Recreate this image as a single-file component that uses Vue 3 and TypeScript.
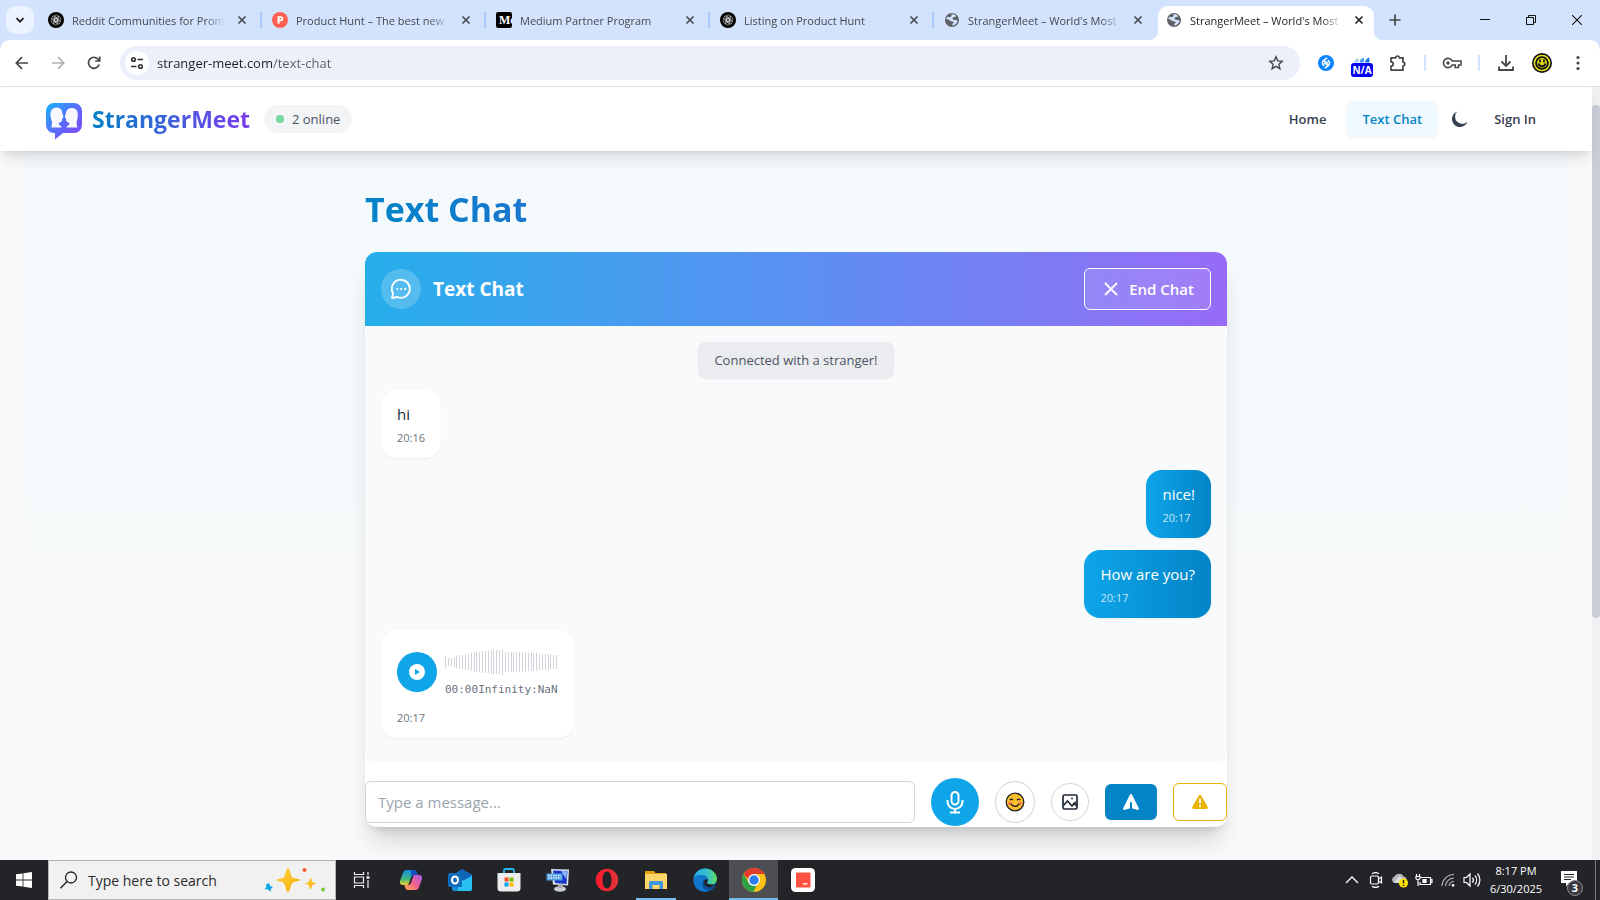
<script setup lang="ts">
import { ref } from 'vue'

interface Tab {
  id: number
  icon: 'knot' | 'hunt' | 'medium' | 'globe'
  title: string
  active?: boolean
}

interface Message {
  id: number
  text: string
  time: string
  mine: boolean
  voice?: boolean
}

const tabs: Tab[] = [
  { id: 1, icon: 'knot', title: 'Reddit Communities for Promotion' },
  { id: 2, icon: 'hunt', title: 'Product Hunt – The best new products' },
  { id: 3, icon: 'medium', title: 'Medium Partner Program' },
  { id: 4, icon: 'knot', title: 'Listing on Product Hunt' },
  { id: 5, icon: 'globe', title: "StrangerMeet – World's Most Loved" },
  { id: 6, icon: 'globe', title: "StrangerMeet – World's Most Loved", active: true },
]

const messages: Message[] = [
  { id: 1, text: 'hi', time: '20:16', mine: false },
  { id: 2, text: 'nice!', time: '20:17', mine: true },
  { id: 3, text: 'How are you?', time: '20:17', mine: true },
  { id: 4, text: '', time: '20:17', mine: false, voice: true },
]

const levels = [
  12, 8, 8, 10, 12, 14, 14, 16, 16, 18, 20, 20, 20, 22, 22, 22, 24, 24, 24, 24,
  26, 20, 20, 20, 20, 20, 20, 20, 18, 18, 18, 18, 18, 16, 16, 16, 16, 14, 14, 14,
]
const bars = levels.map((h, i) => ({ x: Math.round(i * 2.85), y: 20 - h / 2, h }))

const address = ref('stranger-meet.com/text-chat')
const draft = ref('')
const query = ref('')
</script>

<template>
  <div class="screen">
    <header class="tabstrip">
      <button class="tab-search" aria-label="Search tabs">
        <svg width="12" height="12" viewBox="0 0 12 12"><path d="M2.500 4.200 6 7.700l3.500-3.500" fill="none" stroke="#1f1f1f" stroke-width="1.800" /></svg>
      </button>
      <div class="tabs">
        <div v-for="tab in tabs" :key="tab.id" class="tab" :class="{ active: tab.active }">
          <svg v-if="tab.icon === 'knot'" class="favicon" viewBox="0 0 16 16">
            <circle cx="8" cy="8" r="8" />
            <g fill="none" stroke="#ddd" stroke-width=".6">
              <rect v-for="n in 6" :key="n" x="6.200" y="3" width="4.400" height="6.400" rx="2.200" :transform="`rotate(${n * 60} 8 8)`" />
            </g>
          </svg>
          <svg v-else-if="tab.icon === 'hunt'" class="favicon" viewBox="0 0 16 16">
            <circle cx="8" cy="8" r="8" fill="#ff6154" />
            <path d="M5.600 11.800V4.300h3.200a2.500 2.500 0 0 1 0 5H7.500v2.500zM7.500 6v1.600h1.200a.8.8 0 0 0 0-1.600z" fill="#fff" fill-rule="evenodd" />
          </svg>
          <svg v-else-if="tab.icon === 'medium'" class="favicon" viewBox="0 0 16 16">
            <rect width="16" height="16" rx="2" />
            <text x="3" y="12" fill="#fff" font-family="Liberation Serif, serif" font-weight="700" font-size="12">Mc</text>
          </svg>
          <svg v-else class="favicon" viewBox="0 0 16 16">
            <circle cx="8" cy="8" r="7" fill="#5f6368" />
            <path d="M7.300 2.300c1.800-.5 3.700.2 4.900 1.500l-1 1.300H9.500L8.300 6.500 9.800 8h2.400l1.400.8c-.3 1.700-1.300 3.200-2.900 4l-2.300 1v-2L10 10.500 8.700 9.400 6.200 9 4.500 7.400 2.300 7c.3-.9.700-1.700 1.300-2.400l2 .8L7.700 4z" fill="#d3e3fd" />
          </svg>
          <button class="tab-title">{{ tab.title }}</button>
          <button class="tab-close" :aria-label="`Close ${tab.title}`">
            <svg width="10" height="10" viewBox="0 0 10 10"><path d="m1.500 1.500 7 7m0-7-7 7" stroke="currentColor" stroke-width="1.600" /></svg>
          </button>
        </div>
      </div>
      <button class="plain new-tab" aria-label="New tab">
        <svg width="12" height="12" viewBox="0 0 12 12"><path d="M6 .5v11M.5 6h11" stroke="#444746" stroke-width="1.700" /></svg>
      </button>
      <div class="window-controls">
        <button class="plain" aria-label="Minimize"><svg width="10" height="10" viewBox="0 0 10 10"><path d="M0 4.500h10" stroke="#111" /></svg></button>
        <button class="plain" aria-label="Restore"><svg width="10" height="10" viewBox="0 0 10 10"><path d="M.5 2.500h7v7h-7zM2.500 2.500v-2h7v7h-2" fill="none" stroke="#111" /></svg></button>
        <button class="plain" aria-label="Close window"><svg width="10" height="10" viewBox="0 0 10 10"><path d="m0 0 10 10M10 0 0 10" stroke="#111" stroke-width="1.100" /></svg></button>
      </div>
    </header>

    <div class="toolbar-wrap">
      <nav class="toolbar" aria-label="Browser">
        <button class="plain" aria-label="Back"><svg width="14" height="14" viewBox="0 0 14 14"><path d="M13 7H1.500M7 1.200 1.300 7 7 12.800" fill="none" stroke="#474747" stroke-width="1.700" /></svg></button>
        <button class="plain" aria-label="Forward"><svg width="14" height="14" viewBox="0 0 14 14"><path d="M1 7h11.500M7 1.200 12.700 7 7 12.800" fill="none" stroke="#b0b0b0" stroke-width="1.700" /></svg></button>
        <button class="plain" aria-label="Reload"><svg width="14" height="14" viewBox="0 0 14 14"><path d="M12.200 8.500A5.500 5.500 0 1 1 11.400 3.500L12.500 5M12.700.5V5H8.200" fill="none" stroke="#474747" stroke-width="1.700" /></svg></button>
        <div class="omnibox">
          <button class="site-info" aria-label="Site information">
            <svg width="14" height="14" viewBox="0 0 14 14" fill="none" stroke="#303134" stroke-width="1.600"><circle cx="3.500" cy="3.500" r="1.800" /><path d="M7.500 3.500H13M1 10.500h5.500" /><circle cx="10.500" cy="10.500" r="1.800" /></svg>
          </button>
          <input v-model="address" class="address" aria-label="Address" spellcheck="false" />
          <button class="plain" aria-label="Bookmark">
            <svg width="16" height="16" viewBox="0 0 16 16"><path d="m8 1.800 1.800 4.100 4.500.4-3.400 3 1 4.400L8 11.400l-3.900 2.300 1-4.400-3.400-3 4.500-.4z" fill="none" stroke="#474747" stroke-width="1.400" /></svg>
          </button>
        </div>
        <div class="extensions">
          <button class="plain" aria-label="Shazam">
            <svg width="16" height="16" viewBox="0 0 16 16"><circle cx="8" cy="8" r="8" fill="#0a84ff" /><path d="M8.800 3.200 6 5.200C3.800 6.900 4 9 5.800 10.400M7.200 12.800l2.800-2c2.200-1.700 2-3.800.2-5.200M6.300 8.200 9.500 10M6.600 6.100l3 2" fill="none" stroke="#fff" stroke-width="1.500" stroke-linecap="round" /></svg>
          </button>
          <button class="rank" aria-label="Site rank">
            <svg width="18" height="6" viewBox="0 0 18 6"><path d="M1 5.500C1 3.500 3 2 5 1c.8 2 .8 3.500 0 4.500z" fill="#a6d0fa" /><path d="M6.500 5.500C6.500 3 8.500 1.500 10.500.5c.8 2 .8 4 0 5z" fill="#4b9cf3" /><path d="M12 5.500c0-2.500 2-4 4-5 .8 2 .8 4 0 5z" fill="#1a73e8" /></svg>
            <span>N/A</span>
          </button>
          <button class="plain" aria-label="Extensions">
            <svg width="18" height="18" viewBox="0 0 18 18"><path d="M2 3.800h4.700a1.800 1.800 0 0 1 3.600 0H14v4.400a1.800 1.800 0 0 1 0 3.600v4.400H2v-4a2.200 2.200 0 0 0 0-4.400z" fill="none" stroke="#474747" stroke-width="1.700" stroke-linejoin="round" /></svg>
          </button>
          <i class="divider"></i>
          <button class="plain" aria-label="Passwords">
            <svg width="20" height="12" viewBox="0 0 20 12"><path d="M10.200 4A4.600 4.600 0 1 0 10.200 8h3v2.500h3.300V8H19V4z" fill="none" stroke="#474747" stroke-width="1.600" /><circle cx="6" cy="6" r="1.700" fill="#474747" /></svg>
          </button>
          <i class="divider"></i>
          <button class="plain" aria-label="Downloads">
            <svg width="18" height="18" viewBox="0 0 18 18"><path d="M9 1v10.500M4.500 7.500 9 12l4.500-4.500M2 12.500V16h14v-3.500" fill="none" stroke="#474747" stroke-width="1.800" /></svg>
          </button>
          <button class="plain" aria-label="Profile">
            <svg width="20" height="20" viewBox="0 0 20 20"><circle cx="10" cy="10" r="10" fill="#111" /><circle cx="10" cy="10" r="7.600" fill="none" stroke="#e5e010" stroke-width="1.500" /><circle cx="10" cy="10" r="5" fill="#d8d414" /><path d="M8 6.500v2.800M12 6.500v2.800M6.500 10.500c1 3.700 6 3.700 7 0" fill="none" stroke="#111" stroke-width="1.700" /></svg>
          </button>
          <button class="plain" aria-label="Menu">
            <svg width="4" height="16" viewBox="0 0 4 16" fill="#474747"><circle cx="2" cy="2.500" r="1.600" /><circle cx="2" cy="8" r="1.600" /><circle cx="2" cy="13.500" r="1.600" /></svg>
          </button>
        </div>
      </nav>
    </div>

    <div class="viewport">
      <div class="page">
        <header class="site-header">
          <a class="brand" href="#">
            <svg width="36" height="38" viewBox="0 0 36 38">
              <defs><linearGradient id="logo" x1="0" y1="0" x2="1" y2="1"><stop stop-color="#14b4ff" /><stop offset=".5" stop-color="#5a6cfb" /><stop offset="1" stop-color="#8a3ffc" /></linearGradient></defs>
              <path d="M8 1h20a8 8 0 0 1 8 8v14a8 8 0 0 1-8 8H17l-8 6.500V31H8a8 8 0 0 1-8-8V9a8 8 0 0 1 8-8z" fill="url(#logo)" />
              <path d="M4.500 13C4 8.500 7 5.500 10.500 5.500c3.700 0 6 2.700 6 6.500l1 3-1.200 1c.2 2.500-.8 4.500-3.300 4.700v2.200c1.500.6 2.500 1.200 2.700 2.600H5.300c.3-1.500 1-3.700.7-6C5.300 18 4.700 15.500 4.500 13zM31.800 13c.5-4.500-2.500-7-6-7-3.700 0-6 2.700-6 6l-1.200 3 1.200 1c-.2 2.500.8 4.500 3.300 4.700v2.200c-1.500.6-2.500 1.200-2.700 2.600h11c-.3-1.500-1-3.700-.7-6 .6-1.500 1-4 1.100-6.500z" fill="#f8f7fc" />
            </svg>
            <span>StrangerMeet</span>
          </a>
          <span class="online"><i></i>2 online</span>
          <nav class="site-nav" aria-label="Main">
            <a href="#">Home</a>
            <a href="#" class="current">Text Chat</a>
            <button class="plain moon" aria-label="Dark mode"><svg width="16" height="16" viewBox="0 0 16 16"><path d="M5.200.5A8 8 0 1 0 15.500 10.800 7.200 7.200 0 0 1 5.200.5z" fill="#374151" /></svg></button>
            <a href="#" class="signin">Sign In</a>
          </nav>
        </header>

        <main class="backdrop">
          <div class="column">
            <h1>Text Chat</h1>
            <section class="card">
              <header class="card-head">
                <span class="chat-badge">
                  <svg width="20" height="20" viewBox="0 0 20 20"><path d="M1 19l1.100-4.600A9 9 0 1 1 6.200 18z" fill="none" stroke="#fff" stroke-width="1.800" stroke-linejoin="round" /><circle cx="6.300" cy="10" r="1.100" fill="#fff" /><circle cx="10.200" cy="10" r="1.100" fill="#fff" /><circle cx="14.100" cy="10" r="1.100" fill="#fff" /></svg>
                </span>
                <h2>Text Chat</h2>
                <button class="end-chat">
                  <svg width="14" height="14" viewBox="0 0 14 14"><path d="m1 1 12 12M13 1 1 13" stroke="#fff" stroke-width="1.800" /></svg>
                  End Chat
                </button>
              </header>

              <div class="messages">
                <p class="notice">Connected with a stranger!</p>
                <div v-for="m in messages" :key="m.id" class="bubble" :class="{ mine: m.mine }">
                  <div v-if="m.voice" class="voice">
                    <button class="play" aria-label="Play voice message">
                      <svg width="16" height="16" viewBox="0 0 16 16"><circle cx="8" cy="8" r="8" fill="#fff" /><path d="M6 5v6l5-3z" fill="#0ea5e9" /></svg>
                    </button>
                    <div class="track">
                      <svg width="112" height="40" viewBox="0 0 112 40" shape-rendering="crispEdges">
                        <rect v-for="(bar, i) in bars" :key="i" :x="bar.x" :y="bar.y" width="1" :height="bar.h" fill="#d1d5db" />
                      </svg>
                      <div class="duration"><span>00:00</span><span>Infinity:NaN</span></div>
                    </div>
                  </div>
                  <p v-else>{{ m.text }}</p>
                  <time>{{ m.time }}</time>
                </div>
              </div>

              <form class="composer" @submit.prevent>
                <input v-model="draft" class="draft" placeholder="Type a message..." aria-label="Message" />
                <button type="button" class="mic" aria-label="Record voice">
                  <svg width="24" height="24" viewBox="0 0 24 24" fill="none" stroke="#fff" stroke-width="2"><rect x="8.500" y="2" width="7" height="12.500" rx="3.500" /><path d="M4.500 10v1.500a7.500 7.500 0 0 0 15 0V10M12 19v3M7 22.500h10" /></svg>
                </button>
                <button type="button" class="emoji" aria-label="Emoji">
                  <svg width="20" height="20" viewBox="0 0 20 20"><circle cx="10" cy="10" r="8.800" fill="#fdbf2d" stroke="#222" stroke-width="1.300" /><circle cx="5" cy="11.500" r="1.800" fill="#f2784b" /><circle cx="15" cy="11.500" r="1.800" fill="#f2784b" /><path d="M4.800 8.200c.8-1.500 2.400-1.500 3.200 0M12 8.200c.8-1.500 2.400-1.500 3.200 0M6 11.800c1.500 3.400 6.500 3.400 8 0" fill="none" stroke="#222" stroke-width="1.300" /></svg>
                </button>
                <button type="button" class="image" aria-label="Send image">
                  <svg width="16" height="16" viewBox="0 0 16 16" fill="none" stroke="#1f2937" stroke-width="1.700"><rect x="1" y="1" width="14" height="14" rx="1.500" /><path d="m1.500 11.500 4-4.500 4.500 5 2-2.500 3 2.500M12 9.500l2-1.500" /><circle cx="10" cy="4.600" r="1" fill="#1f2937" stroke="none" /></svg>
                </button>
                <button class="send" aria-label="Send">
                  <svg width="16" height="16" viewBox="0 0 16 16"><path d="M8 0c.7 0 1 .4 1.300 1L15.800 14.300c.4 1-.3 1.900-1.300 1.600L9 14.200V9a1 1 0 0 0-2 0v5.200l-5.500 1.700c-1 .3-1.700-.6-1.300-1.600L6.700 1C7 .4 7.300 0 8 0z" fill="#fff" /></svg>
                </button>
                <button type="button" class="report" aria-label="Report">
                  <svg width="16" height="14" viewBox="0 0 16 14"><path d="M8 0c.6 0 1 .3 1.300.8l6.400 11c.6 1-.1 2.200-1.300 2.200H1.600C.4 14-.3 12.800.3 11.800l6.400-11C7 .3 7.400 0 8 0z" fill="#eab308" /><path d="M8 3.500v5M8 10v2" stroke="#fff" stroke-width="1.800" /></svg>
                </button>
              </form>
            </section>
          </div>
        </main>
      </div>
      <div class="scrollbar"><div class="thumb"></div></div>
    </div>

    <footer class="taskbar">
      <button class="task start" aria-label="Start"><svg width="16" height="16" viewBox="0 0 16 16"><path d="M0 2.300 6.600 1.400v6.200H0zM7.400 1.300 16 0v7.600H7.400zM0 8.400h6.600v6.200L0 13.700zM7.400 8.400H16V16l-8.600-1.300z" fill="#fff" /></svg></button>
      <label class="search">
        <svg width="18" height="18" viewBox="0 0 18 18"><circle cx="11" cy="6.500" r="5.500" fill="none" stroke="#222" stroke-width="1.300" /><path d="m7 10.500-6.500 6.700" stroke="#222" stroke-width="1.400" /></svg>
        <input v-model="query" placeholder="Type here to search" aria-label="Search" />
        <svg width="62" height="26" viewBox="0 0 62 26">
          <defs><linearGradient id="spark" x1="0" y1="0" x2="1" y2="1"><stop stop-color="#ffd84a" /><stop offset="1" stop-color="#f6a800" /></linearGradient></defs>
          <path d="M24 1c2 0 2.500 8 4.500 9.500S36 11.500 36 13s-5.500 1-7.500 3S26 25 24 25s-2.500-7-4.500-9-7-1.500-7-3 5-1 7-2.500S22 1 24 1z" fill="url(#spark)" />
          <path d="M46.500 11c1 0 1.200 3.400 2 4.100s3.500.6 3.500 1.400-2.700.7-3.500 1.500-1 4-2 4-1.200-3.200-2-4-3.500-.7-3.500-1.500 2.700-.7 3.500-1.400 1-4.100 2-4.100z" fill="url(#spark)" />
          <path d="m5 16 1.300 3L9 20l-2 1.700-.4 3L4 22.500.5 22l1.800-2-.3-2.500z" fill="#12a5ea" /><circle cx="40.500" cy="3" r="2" fill="#f4622a" /><circle cx="59" cy="22.500" r="2" fill="#7cc53e" />
        </svg>
      </label>
      <div class="apps">
        <button class="task" aria-label="Task view"><svg width="17" height="16" viewBox="0 0 17 16" fill="none" stroke="#eee" stroke-width="1.200"><path d="M1.500 0v2.500h9V0M1.500 16v-2.500h9V16M1.500 5h9v6h-9zM15 0v3M15 8v8" /><path d="M13.500 5.500h3" stroke-width="2.500" /></svg></button>
        <button class="task" aria-label="Copilot">
          <svg width="24" height="22" viewBox="0 0 24 22">
            <defs><linearGradient id="cp1" x1="0" y1="0" x2="0" y2="1"><stop stop-color="#1b8fe6" /><stop offset=".6" stop-color="#3cb77c" /><stop offset="1" stop-color="#f4d02c" /></linearGradient><linearGradient id="cp2" x1="1" y1="0" x2="0" y2="1"><stop stop-color="#a45bf0" /><stop offset=".5" stop-color="#f2608c" /><stop offset="1" stop-color="#ffab4a" /></linearGradient></defs>
            <path d="M8 1h7c2 0 2.500 1.500 3 3l.7 2.500H15c-2 0-2.700 1-3.200 2.500L10 14c-.5 1.500-1 2-2.500 2H4c-2.500 0-3.700-1.500-3-4L4 4c.6-2 1.700-3 4-3z" fill="url(#cp1)" />
            <path d="M12 1h3c2 0 2.500 1.500 3 3l.7 2.500H15c-1.500 0-2.300.6-2.800 1.600z" fill="#1a4fc4" />
            <path d="M16 21H9c-2 0-2.500-1.500-3-3l-.7-2H9c2 0 2.700-1 3.200-2.500L14 8c.5-1.500 1-2 2.500-2H20c2.500 0 3.700 1.500 3 4l-3 8c-.6 2-1.700 3-4 3z" fill="url(#cp2)" />
          </svg>
        </button>
        <button class="task" aria-label="Outlook">
          <svg width="24" height="24" viewBox="0 0 24 24"><path d="M4 8 14 1l10 6v14a2 2 0 0 1-2 2H6a2 2 0 0 1-2-2z" fill="#1490df" /><path d="M10 5h10l-2 10-8 2z" fill="#50d0ff" /><path d="m24 8-14 9v6h12a2 2 0 0 0 2-2z" fill="#28bff2" /><path d="m14 1 10 6-9 6-5-8z" fill="#0f62b4" /><rect y="5" width="14" height="14" rx="1.500" fill="#0f6cbd" /><ellipse cx="7" cy="12" rx="3" ry="3.600" fill="none" stroke="#fff" stroke-width="2" /></svg>
        </button>
        <button class="task" aria-label="Store">
          <svg width="24" height="24" viewBox="0 0 24 24"><path d="M7 6V2.500C7 1.700 7.500 1 8.500 1h7c1 0 1.500.7 1.500 1.500V6" fill="none" stroke="#27b6ee" stroke-width="1.800" /><path d="M.5 5h23v15a3.500 3.500 0 0 1-3.500 3.500H4A3.500 3.500 0 0 1 .5 20z" fill="#ededed" /><path d="M7.500 9.500h4v4h-4z" fill="#f25022" /><path d="M12.500 9.500h4v4h-4z" fill="#7fba00" /><path d="M7.500 14.500h4v4h-4z" fill="#00a4ef" /><path d="M12.500 14.500h4v4h-4z" fill="#ffb900" /></svg>
        </button>
        <button class="task" aria-label="On-screen keyboard">
          <svg width="24" height="24" viewBox="0 0 24 24"><path d="m5 1 18 .5-1 16-15-1z" fill="#dfe5ec" /><path d="m7 2.500 14.500.5-1 13L9 15z" fill="#1a35c8" /><path d="m15 3 6 .2-.7 8z" fill="#8fb4f5" /><ellipse cx="14" cy="21" rx="6" ry="2.700" fill="#c9ccd0" /><path d="M12 16h5v4h-5z" fill="#a9adb3" /><path d="M.5 5.500h16v7H.5z" fill="#4c9ee2" /><path d="M2 7.500h13M2 10h13" stroke="#e8f4ff" stroke-width="1.300" stroke-dasharray="1.500 1" /></svg>
        </button>
        <button class="task" aria-label="Opera">
          <svg width="24" height="24" viewBox="0 0 24 24"><defs><linearGradient id="opera" x1="0" x2="1"><stop stop-color="#ff1b2d" /><stop offset="1" stop-color="#e03436" /></linearGradient></defs><path d="M12 .8a11.200 11.200 0 1 0 0 22.400A11.200 11.200 0 0 0 12 .8zM12 3.500c3 0 4.500 4 4.500 8.500s-1.500 8.500-4.500 8.500S7.500 16.500 7.500 12 9 3.500 12 3.500z" fill="url(#opera)" fill-rule="evenodd" /></svg>
        </button>
        <button class="task open" aria-label="File Explorer">
          <svg width="24" height="24" viewBox="0 0 24 24"><path d="M1 3h9l1.500 2H22v4H1z" fill="#e6a211" /><path d="M1 6h22v15H1z" fill="#ffd669" /><path d="M5 14.500A1.500 1.500 0 0 1 6.500 13h11a1.500 1.500 0 0 1 1.500 1.500V21h-3.500v-4h-7v4H5z" fill="#3f96dc" /></svg>
        </button>
        <button class="task" aria-label="Edge">
          <svg width="24" height="24" viewBox="0 0 24 24"><defs><linearGradient id="edge" x1="0" x2="1"><stop stop-color="#2aa5e8" /><stop offset=".6" stop-color="#35c1c9" /><stop offset="1" stop-color="#62dc58" /></linearGradient></defs><circle cx="12" cy="12" r="11.500" fill="#0d64ba" /><path d="M.5 11C1.500 4.500 6.500.5 12 .5c7 0 12 5 12 10 0 4-3 6-6 6-2.500 0-4-.8-4-1.700 0-.6 1-1 1-3 0-2.500-2.500-4.500-6-4.500C5.500 7.300 2 8.500.5 11z" fill="url(#edge)" /><path d="M13.500 11c-4 0-5.500 3.500-4 7 1.300 3 4.500 5 8 4.300 2-.8 3.700-2.200 5-4-4 2-9 1-9.500-2.500-.2-1.700 1.500-2.500 1.500-4z" fill="#0b4f9c" /><path d="M15 11.500c-2.500-.8-4 .8-4 3 0 2 1.500 4 4 4.500 3 .6 6.500-.5 8.300-3.200-1.500.9-3.300 1-5.300.7-2.500 0-4-.8-4-1.700 0-.6 1-1 1-3.300z" fill="#222427" /><path d="M.5 12C1 8 5 6.500 9 7.300c3 .5 5 2 5.500 3.700-4-.8-6.500 2.500-5 7 1 3 3.500 5 7 4.800C8 26 0 20 .5 12z" fill="#1277cc" /></svg>
        </button>
        <button class="task focused" aria-label="Chrome">
          <svg width="24" height="24" viewBox="0 0 24 24"><circle cx="12" cy="12" r="12" fill="#fbc116" /><path d="M1.600 6a12 12 0 0 1 20.800 0H12v6H6.800z" fill="#e33b2e" /><path d="M1.600 6 6.800 15 12 18h2.200L11.500 24A12 12 0 0 1 1.600 6z" fill="#2b9f46" /><circle cx="12" cy="12" r="6" fill="#fff" /><circle cx="12" cy="12" r="4.700" fill="#2f7de9" /></svg>
        </button>
        <button class="task" aria-label="Recorder">
          <svg width="24" height="24" viewBox="0 0 24 24"><rect width="24" height="24" rx="4.500" fill="#fff" /><rect x="5" y="4.500" width="14.500" height="15" rx="1" fill="#ff5240" /><path d="M12 15.800h4.500" stroke="#fff" stroke-width="1.400" /></svg>
        </button>
      </div>
      <div class="tray">
        <button class="plain" aria-label="Hidden icons"><svg width="14" height="14" viewBox="0 0 14 14"><path d="m1 10 6-6 6 6" fill="none" stroke="#fff" stroke-width="1.300" /></svg></button>
        <button class="plain" aria-label="Meet now"><svg width="14" height="16" viewBox="0 0 14 16" fill="none" stroke="#fff" stroke-width="1.200"><rect x="1.500" y="4" width="8" height="8" rx="1.500" /><path d="m9.500 7 3-2v6l-3-2M3 1.800c2-1.400 5-1.400 7 0M3 14.200c2 1.400 5 1.400 7 0" /></svg></button>
        <button class="plain" aria-label="OneDrive"><svg width="18" height="16" viewBox="0 0 18 16"><path d="M3.500 11a3.400 3.400 0 0 1 0-6.500C5 1.500 11 .5 12.500 4.500c2 .2 3 1.500 3 3V11z" fill="#b7b9bb" /><path d="m8 4 6 4-6 3H3z" fill="#dcdddf" /><circle cx="12.500" cy="11" r="4.600" fill="#ffe100" /><path d="M12.500 8v3.600M12.500 12.700V14" stroke="#222" stroke-width="1.400" /></svg></button>
        <button class="plain" aria-label="Battery"><svg width="18" height="14" viewBox="0 0 18 14" fill="none" stroke="#fff" stroke-width="1.200"><path d="M6 4.500h9.500v7H5V9M15.500 6.500h1.500v3h-1.500M1.500 1v2M4.500 1v2M1 3.500h4v2.200L3 7 1 5.700zM3 7v6" /><path d="M8 6.500h3v3H8z" fill="#fff" /></svg></button>
        <button class="plain" aria-label="Network"><svg width="14" height="14" viewBox="0 0 14 14" fill="none" stroke="#bbb" stroke-width="1.100"><path d="M1 13A12 12 0 0 1 13 1.500M4.500 13A8.500 8.500 0 0 1 13 5M8 13a5 5 0 0 1 5-4.500" /><circle cx="12" cy="12.300" r="1.400" fill="#fff" stroke="none" /></svg></button>
        <button class="plain" aria-label="Volume"><svg width="18" height="16" viewBox="0 0 18 16" fill="none" stroke="#fff" stroke-width="1.200"><path d="M1 5.500h2.500L7 2v12l-3.500-3.500H1zM9.500 5.500a4 4 0 0 1 0 5M12 3.500a7 7 0 0 1 0 9M14.500 1.500a10 10 0 0 1 0 13" /></svg></button>
        <button class="clock"><span>8:17 PM</span><span>6/30/2025</span></button>
        <button class="notify" aria-label="3 notifications">
          <svg width="16" height="16" viewBox="0 0 16 16"><path d="M0 0h16v12H8l-3 3.500V12H0z" fill="#fff" /><path d="M3 3.500h10M3 6h10M3 8.500h7" stroke="#222427" /></svg>
          <b>3</b>
        </button>
      </div>
    </footer>
  </div>
</template>

<style>
body {
  margin: 0;
}
</style>

<style scoped>
.screen,
.screen * {
  box-sizing: border-box;
}
.screen {
  display: flex;
  flex-direction: column;
  min-height: 100vh;
  font-family: "Open Sans", "Noto Sans", sans-serif;
  font-size: 13px;
  color: #1f2937;
  background: #d3e3fd;
}
button,
input {
  font: inherit;
  color: inherit;
  border: 0;
  padding: 0;
  margin: 0;
  background: none;
  outline: none;
}
svg {
  display: block;
  flex: none;
}
h1,
h2,
p {
  margin: 0;
}
a {
  color: inherit;
  text-decoration: none;
}
.plain {
  display: grid;
  place-items: center;
}

/* tab strip */
.tabstrip {
  display: flex;
  height: 40px;
  padding-left: 6px;
}
.tab-search {
  display: grid;
  place-items: center;
  width: 28px;
  height: 28px;
  margin: 6px 4px 0 0;
  border-radius: 10px;
  background: #ecf2fe;
}
.tabs {
  display: flex;
}
.tab {
  position: relative;
  display: flex;
  align-items: center;
  width: 224px;
  height: 34px;
  margin-top: 6px;
  padding: 0 15px 6px 10px;
  font-size: 11px;
  color: #45484d;
}
.tab::after {
  content: "";
  position: absolute;
  right: 0;
  top: 6px;
  width: 2px;
  height: 16px;
  background: #a8c7fa;
}
.tab:nth-child(5)::after {
  display: none;
}
.tab.active {
  width: 216px;
  padding-right: 10px;
  padding-left: 8px;
  border-radius: 10px 10px 0 0;
  background: #fff;
  color: #1f1f1f;
}
.tab.active::before,
.tab.active::after {
  content: "";
  position: absolute;
  top: auto;
  bottom: 0;
  width: 10px;
  height: 10px;
  background: radial-gradient(circle at 0 0, transparent 10px, #fff 11px);
}
.tab.active::before {
  left: -10px;
}
.tab.active::after {
  right: -10px;
  background: radial-gradient(circle at 100% 0, transparent 10px, #fff 11px);
}
.favicon {
  width: 16px;
  height: 16px;
  overflow: hidden;
}
.tab-title {
  flex: 1;
  min-width: 0;
  margin: 0 12px 0 8px;
  overflow: hidden;
  white-space: nowrap;
  text-align: left;
  mask-image: linear-gradient(90deg, #000 calc(100% - 20px), transparent);
}
.tab-close {
  width: 10px;
  height: 10px;
}
.new-tab {
  width: 28px;
  margin-left: 7px;
}
.window-controls {
  display: flex;
  margin-left: auto;
}
.window-controls button {
  width: 46px;
}

/* toolbar */
.toolbar-wrap {
  background: #d3e3fd;
}
.toolbar {
  display: flex;
  align-items: center;
  height: 47px;
  padding: 0 4px;
  border-bottom: 1px solid #dfe1e5;
  border-radius: 10px 10px 0 0;
  background: #fff;
}
.toolbar > button {
  width: 36px;
  height: 34px;
}
.omnibox {
  display: flex;
  flex: 1;
  align-items: center;
  height: 34px;
  margin-left: 8px;
  padding: 0 16px 0 5px;
  border-radius: 17px;
  background: #ebf0fa;
}
.site-info {
  display: grid;
  place-items: center;
  width: 24px;
  height: 24px;
  border-radius: 50%;
  background: #fff;
}
.address {
  flex: 1;
  min-width: 0;
  margin-left: 8px;
  background: linear-gradient(90deg, #1f1f1f 115px, #5a5d63 115px);
  background-clip: text;
  color: transparent;
}
.extensions {
  display: flex;
  align-items: center;
  margin-left: 8px;
}
.extensions button {
  width: 36px;
  height: 34px;
}
.divider {
  width: 2px;
  height: 16px;
  margin: 0 8px;
  background: #d3e3fd;
}
.extensions .rank {
  display: flex;
  flex-direction: column;
  align-items: center;
  padding-top: 11px;
}
.rank span {
  width: 22px;
  height: 14px;
  border-radius: 3px;
  background: #0000f5;
  color: #fff;
  font-size: 10px;
  font-weight: 700;
  line-height: 14px;
}

/* page */
.viewport {
  display: flex;
  flex: 1;
  background: #f9fafb;
}
.page {
  display: flex;
  flex: 1;
  flex-direction: column;
  min-width: 0;
}
.scrollbar {
  width: 8px;
  padding-top: 18px;
  background: #f1f1f3;
}
.thumb {
  height: 68%;
  border-radius: 4px;
  background: #cbced8;
}
.site-header {
  position: relative;
  display: flex;
  align-items: center;
  height: 64px;
  padding: 0 40px 0 46px;
  background: #fff;
  box-shadow: 0 10px 15px -3px rgb(0 0 0 / 0.12), 0 4px 6px -4px rgb(0 0 0 / 0.1);
}
.brand {
  display: flex;
  align-items: center;
  gap: 10px;
  font-size: 23px;
  font-weight: 700;
}
.brand svg {
  margin-top: 4px;
}
.brand span {
  background: linear-gradient(90deg, #0284c7, #7c3aed);
  background-clip: text;
  color: transparent;
}
.online {
  display: flex;
  align-items: center;
  gap: 8px;
  height: 28px;
  margin-left: 14px;
  padding: 0 12px;
  border-radius: 14px;
  background: #f3f4f6;
  color: #4b5563;
}
.online i {
  width: 8px;
  height: 8px;
  border-radius: 50%;
  background: #74d99b;
}
.site-nav {
  display: flex;
  align-items: center;
  margin-left: auto;
  color: #374151;
  font-weight: 600;
}
.site-nav a {
  padding: 8px 16px;
  border-radius: 6px;
  line-height: 20px;
}
.site-nav .current {
  margin: 0 4px;
  background: #f0f9ff;
  color: #0284c7;
  box-shadow: 0 1px 2px rgb(0 0 0 / 0.05);
}
.moon {
  width: 36px;
  height: 36px;
}
.backdrop {
  flex: 1;
  width: 100%;
  max-width: 1536px;
  margin: 0 auto;
  background: linear-gradient(#f4fafd, #f9fafb 75%);
}
.column {
  max-width: 862px;
  margin: 0 auto;
  padding: 34px 0 33px;
}
h1 {
  margin-bottom: 19px;
  background: linear-gradient(90deg, #0284c7, #7c3aed);
  background-clip: text;
  color: transparent;
  font-size: 34px;
  font-weight: 700;
  line-height: 48px;
}
.card {
  padding-bottom: 1px;
  border-radius: 12px;
  background: #fff;
  box-shadow: 0 20px 25px -5px rgb(0 0 0 / 0.14), 0 8px 10px -6px rgb(0 0 0 / 0.14);
}
.card-head {
  display: flex;
  align-items: center;
  gap: 12px;
  padding: 16px;
  border-radius: 12px 12px 0 0;
  background: linear-gradient(90deg, #26aeeb, #5a90f1 50%, #976bf7);
  color: #fff;
}
.chat-badge {
  display: grid;
  place-items: center;
  width: 40px;
  height: 40px;
  border-radius: 50%;
  background: rgb(255 255 255 / 0.2);
}
h2 {
  font-size: 19px;
  font-weight: 700;
  line-height: 28px;
}
.end-chat {
  display: flex;
  align-items: center;
  gap: 11px;
  height: 42px;
  margin-left: auto;
  padding: 0 16px 0 19px;
  border: 1px solid #fff;
  border-radius: 6px;
  background: rgb(255 255 255 / 0.12);
  font-size: 15px;
  font-weight: 600;
}
.messages {
  display: flex;
  flex-direction: column;
  align-items: flex-start;
  gap: 12px;
  padding: 16px 16px 24px;
  border-radius: 8px;
  background: #f9fafb;
}
.notice {
  align-self: center;
  padding: 8px 16px;
  border-radius: 8px;
  background: #ebecef;
  box-shadow: 0 1px 2px rgb(0 0 0 / 0.08);
  color: #4b5563;
  line-height: 20px;
}
.bubble {
  padding: 12px 16px;
  border-radius: 16px;
  background: #fff;
  box-shadow: 0 1px 2px rgb(0 0 0 / 0.06);
}
.bubble p {
  margin-bottom: 4px;
  font-size: 15px;
  line-height: 24px;
}
.bubble time {
  display: block;
  color: #6b7280;
  font-size: 11px;
  line-height: 16px;
}
.bubble.mine {
  align-self: flex-end;
  background: linear-gradient(90deg, #0ea5e9, #0284c7);
  color: #fff;
}
.mine time {
  color: #c5e6f7;
}
.voice {
  display: flex;
  align-items: center;
  gap: 8px;
  height: 60px;
  margin-bottom: 8px;
}
.play {
  display: grid;
  place-items: center;
  width: 40px;
  height: 40px;
  border-radius: 50%;
  background: #0ea5e9;
}
.track {
  height: 60px;
}
.duration {
  display: flex;
  justify-content: space-between;
  color: #6b7280;
  font-family: "DejaVu Sans Mono", "Liberation Mono", monospace;
  font-size: 11px;
  line-height: 16px;
}
.composer {
  display: flex;
  align-items: center;
  gap: 16px;
  margin-top: 16px;
}
.draft {
  flex: 1;
  min-width: 0;
  height: 42px;
  padding: 0 12px;
  border: 1px solid #d1d5db;
  border-radius: 6px;
  background: #fff;
  font-size: 15px;
}
.draft::placeholder {
  color: #9ca3af;
}
.composer button {
  display: grid;
  place-items: center;
}
.composer .mic {
  width: 48px;
  height: 48px;
  border-radius: 50%;
  background: #0ea5e9;
}
.composer .emoji {
  width: 40px;
  height: 42px;
  border: 1px solid #d1d5db;
  border-radius: 50%;
}
.composer .image {
  width: 38px;
  height: 38px;
  border: 1px solid #d1d5db;
  border-radius: 50%;
}
.composer .send {
  width: 52px;
  height: 36px;
  border-radius: 6px;
  background: #0284c7;
}
.composer .report {
  width: 54px;
  height: 38px;
  border: 1px solid #eab308;
  border-radius: 6px;
}

/* taskbar */
.taskbar {
  display: flex;
  height: 40px;
  background: #222427;
  color: #fff;
}
.task {
  display: grid;
  place-items: center;
  width: 49px;
  height: 40px;
}
.task.start {
  width: 48px;
}
.search {
  display: flex;
  align-items: center;
  width: 288px;
  padding: 0 9px 0 11px;
  border: 1px solid #b5b5b5;
  background: #f1f1f1;
}
.search input {
  flex: 1;
  min-width: 0;
  margin-left: 10px;
  color: #2b2b2b;
  font-size: 14px;
}
.search input::placeholder {
  color: #2b2b2b;
}
.apps {
  display: flex;
  margin-left: 1px;
}
.task.open {
  background: linear-gradient(#76b9ed, #76b9ed) center bottom / 40px 2px no-repeat;
}
.task.focused {
  border-bottom: 2px solid #76b9ed;
  background: #4d4e51;
  padding-top: 2px;
}
.tray {
  display: flex;
  align-items: center;
  margin-left: auto;
  padding-right: 4px;
}
.tray .plain {
  width: 24px;
  height: 40px;
}
.clock {
  display: flex;
  flex-direction: column;
  align-items: center;
  width: 64px;
  font-size: 11px;
  line-height: 18px;
}
.notify {
  position: relative;
  display: grid;
  place-items: center;
  width: 48px;
  height: 40px;
  padding: 0 6px 2px 0;
  border-right: 1px solid #77797c;
}
.notify b {
  position: absolute;
  right: 12px;
  bottom: 4px;
  width: 16px;
  height: 16px;
  border: 1px solid #8a8c8f;
  border-radius: 50%;
  background: #37393c;
  font-size: 11px;
  line-height: 14px;
}
</style>
